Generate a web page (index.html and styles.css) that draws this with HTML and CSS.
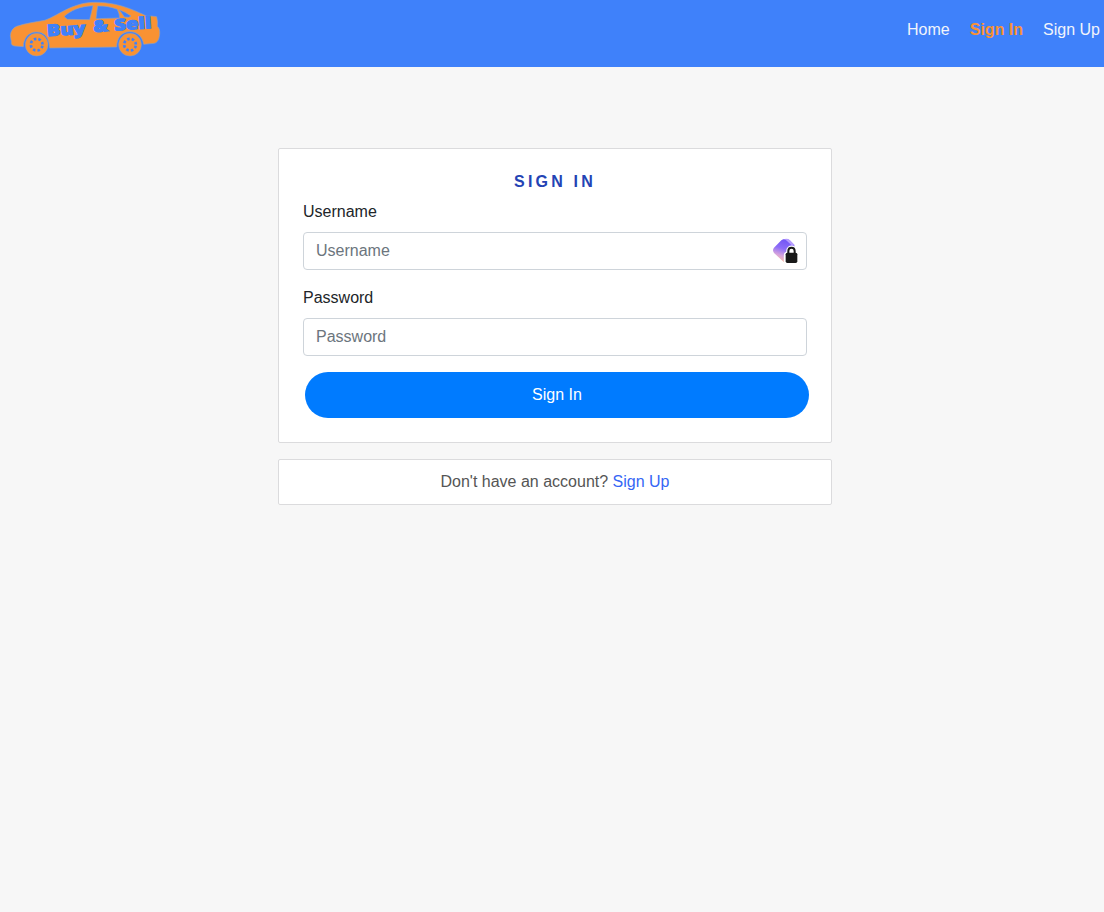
FILE: index.html
```html
<!DOCTYPE html>
<html lang="en">
<head>
<meta charset="utf-8">
<title>Buy &amp; Sell - Sign In</title>
<link rel="stylesheet" href="styles.css">
</head>
<body>
<header class="navbar">
  <a class="brand" href="#" aria-label="Buy &amp; Sell">
    <svg class="logo" viewBox="0 0 540 201">
      <path class="car" d="M31 107C32 94 38 84 50 79C76 70 106 66 134 61C158 53 180 37 207 25C230 15 252 7 288 7C324 7 357 14 389 26C410 34 427 42 441 49Q456 47 470 50Q474 64 472 79C478 84 480 92 479 103C477 119 473 127 463 130L431 133C427 109 412 95 389 95C365 95 350 114 350 141L149 144C148 114 134 96 109 96C85 96 70 116 70 140L44 138Q32 136 34 125Z"/>
      <path class="glass" d="M193 49C212 32 237 19 279 17Q274 39 269 59L202 58Q196 55 193 49Z"/>
      <path class="glass" d="M293 18C315 17 334 21 352 28Q359 43 359 54L288 56Q290 36 293 18Z"/>
      <path class="glass" d="M357 29Q376 35 393 48L386 52L373 51Q367 41 357 29Z"/>
      <g class="wheel" transform="translate(110 134)">
        <circle r="34"/>
        <circle class="spokes" r="17.5"/>
      </g>
      <g class="wheel" transform="translate(390 134)">
        <circle r="34"/>
        <circle class="spokes" r="17.5"/>
      </g>
      <g class="wordmark">
        <text transform="translate(142 109) rotate(-4)" textLength="116" lengthAdjust="spacingAndGlyphs">Buy</text>
        <text transform="translate(281 97) rotate(-5)" textLength="44" lengthAdjust="spacingAndGlyphs">&amp;</text>
        <text transform="translate(344 92) rotate(-4)" textLength="112" lengthAdjust="spacingAndGlyphs">Sell</text>
      </g>
    </svg>
  </a>
  <nav class="nav-links">
    <a href="#">Home</a>
    <a class="active" href="#">Sign In</a>
    <a href="#">Sign Up</a>
  </nav>
</header>
<main class="content">
  <form class="card">
    <h1 class="title">SIGN IN</h1>
    <label class="label" for="username">Username</label>
    <div class="field">
      <input class="input" id="username" type="text" placeholder="Username">
      <svg class="vault" viewBox="0 0 84 84">
        <defs>
          <linearGradient id="vault-fill" x1="0.6" y1="0" x2="0.35" y2="1">
            <stop offset="0" stop-color="#7054f5"/>
            <stop offset="0.4" stop-color="#8c6cf8"/>
            <stop offset="0.7" stop-color="#d7a5dc"/>
            <stop offset="1" stop-color="#ffc09a"/>
          </linearGradient>
        </defs>
        <path fill="url(#vault-fill)" d="M6 32L28 10Q33 6 40 6Q48 6 53 10L67 24V50L42 78Q36 76 32 72L6 48Q0 40 6 32Z"/>
        <path fill="#b69cff" d="M34 7Q47 3 54 10L68 24L60 26L45 12Q41 7 34 7Z"/>
        <path class="lock-halo" d="M49 50V42C49 29 68 29 68 42V50Q75 50 75 54V72Q75 77 70 77H47Q42 77 42 72V54Q42 50 49 50Z"/>
        <rect class="lock" x="41" y="47" width="35" height="31" rx="5"/>
        <path class="shackle" d="M49 50V42C49 29 68 29 68 42V50"/>
      </svg>
    </div>
    <label class="label" for="password">Password</label>
    <div class="field">
      <input class="input" id="password" type="password" placeholder="Password">
    </div>
    <button class="submit" type="button">Sign In</button>
  </form>
  <section class="card prompt">Don't have an account? <a href="#">Sign Up</a></section>
</main>
</body>
</html>
```
FILE: styles.css
```css
* { box-sizing: border-box; }

body {
  margin: 0;
  min-height: 100vh;
  background: #f7f7f7;
  color: #212529;
  font: 16px/24px "Liberation Sans", Arial, sans-serif;
}

a { text-decoration: none; }

.navbar {
  display: flex;
  justify-content: space-between;
  height: 67px;
  background: #3f81fa;
}

.brand, .logo { display: block; }
.logo { width: 180px; height: 67px; }
.car, .glass { stroke: #94a0b8; stroke-width: 2; }
.car { fill: #f99233; }
.glass { fill: #3f81fa; }
.wheel { fill: #f99233; stroke: #94a0b8; stroke-width: 1.5; }
.wheel .spokes {
  fill: none;
  stroke: #3f81fa;
  stroke-width: 8;
  stroke-dasharray: 7.5 6.244;
  stroke-dashoffset: 10.622;
}
.wordmark {
  fill: #3f81fa;
  stroke: #3f81fa;
  stroke-width: 3;
  font: 800 48px "Open Sans", sans-serif;
}

.nav-links { display: flex; gap: 20px; padding: 18px 4px 0 0; }
.nav-links a { color: #f1f4fb; }
.nav-links .active { color: #f99233; font-weight: 700; }

.content { width: 554px; margin: 81px 0 0 278px; }

.card {
  border: 1px solid #dbdbdd;
  border-radius: 2px;
  background: #fff;
}
form.card { height: 295px; padding: 21px 24px 24px; }

.title {
  margin: 0 0 6px;
  color: #2443b4;
  font-size: 16px;
  line-height: 24px;
  letter-spacing: 3.2px;
  text-align: center;
}
.label { display: block; margin-bottom: 8px; }
.field { position: relative; height: 38px; margin-bottom: 16px; }
.input {
  display: block;
  width: 100%;
  height: 38px;
  padding: 6px 12px;
  border: 1px solid #ced4da;
  border-radius: 4px;
  background: #fff;
  color: #495057;
  font: inherit;
}
.input::placeholder { color: #6c757d; opacity: 1; }

.vault {
  position: absolute;
  top: 5px;
  right: 7px;
  width: 28px;
  height: 28px;
}
.lock-halo { fill: #fff; stroke: #fff; stroke-width: 13; }
.lock { fill: #191919; }
.shackle { fill: none; stroke: #191919; stroke-width: 6; }

.submit {
  display: block;
  width: 504px;
  height: 46px;
  margin-left: 2px;
  border: 0;
  border-radius: 23px;
  background: #007bff;
  color: #fff;
  font: inherit;
}

.prompt {
  height: 46px;
  margin-top: 16px;
  padding-top: 10px;
  color: #555;
  text-align: center;
}
.prompt a { color: #3566f5; }
```
